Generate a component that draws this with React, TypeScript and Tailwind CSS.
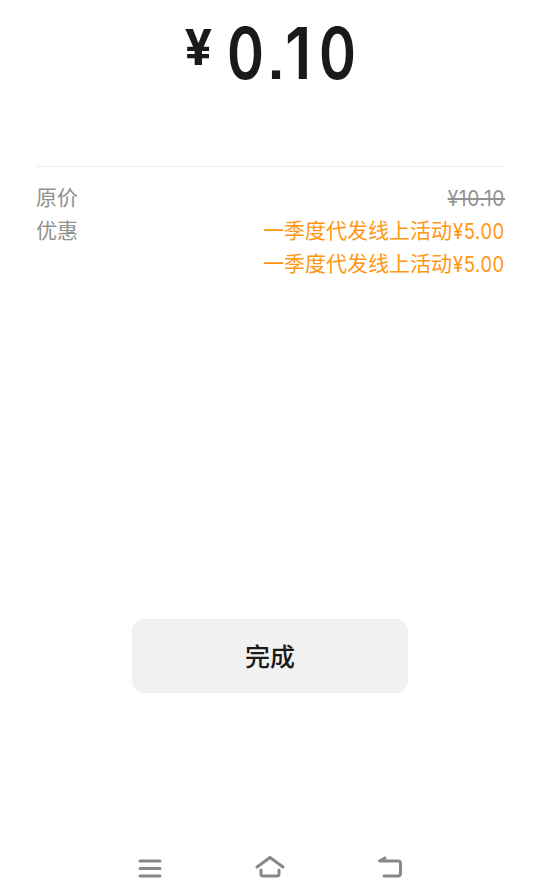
const discounts = [
  { name: "一季度代发线上活动", amount: "¥5.00" },
  { name: "一季度代发线上活动", amount: "¥5.00" },
]

export default function PaymentResultPage() {
  return (
    <div className="flex flex-col h-[888px] w-[538px] overflow-hidden bg-white font-['Inter','Noto_Sans_CJK_SC',sans-serif] text-[#1a1a1a]">
      <div className="flex h-[166px] pl-[185px]">
        <span className="w-[42px] pt-[23px] font-['Roboto'] text-[50px] leading-[50px] font-bold">
          ¥
        </span>
        <div className="flex pt-[17px] text-[71px] leading-[73px] font-semibold">
          <span className="w-[41px] origin-left scale-x-[0.79]">0</span>
          <span className="w-[17px] origin-left font-['Liberation_Sans'] text-[58px] font-bold leading-[83px]">
            .
          </span>
          <span className="w-[34px] origin-left scale-x-[0.88]">1</span>
          <span className="w-[41px] origin-left scale-x-[0.79]">0</span>
        </div>
      </div>

      <div className="ml-9 mr-[34px] h-[452px] border-t border-[#eeeeee] pt-[14px] text-[21px] leading-[33px]">
        <div className="flex justify-between">
          <span className="text-[#919191]">原价</span>
          <span className="-mr-px mt-px h-8 origin-right scale-x-[0.91] tracking-[0.7px] text-[#919191] line-through">
            ¥10.10
          </span>
        </div>
        <div className="flex justify-between">
          <span className="text-[#919191]">优惠</span>
          <div className="text-[#ff9714]">
            {discounts.map((item, index) => (
              <div key={index} className="flex h-[33px] justify-end">
                <span>{item.name}</span>
                <span className="flex w-[52px] justify-end pt-px">
                  <span className="-mr-px origin-right scale-x-[0.88] tracking-[0.6px]">
                    {item.amount}
                  </span>
                </span>
              </div>
            ))}
          </div>
        </div>
      </div>

      <button className="ml-[132px] mt-px h-[74px] w-[276px] shrink-0 rounded-xl bg-[#f1f1f1] pt-[3px] text-[25px] font-medium">
        完成
      </button>

      {/* system navigation keys */}
      <div className="mt-auto flex h-10 gap-20 pl-[130px] text-[#888888]">
        <svg width="40" height="40" viewBox="0 0 40 40" fill="none" stroke="currentColor" strokeWidth="3" strokeLinecap="round">
          <path d="M10 13H30M10 20.5H30M10 28H30" />
        </svg>
        <svg width="40" height="40" viewBox="0 0 40 40" fill="none" stroke="currentColor" strokeWidth="3" strokeLinecap="round" strokeLinejoin="round">
          <path d="M7 19L20 9.5L33 19" />
          <path d="M11 22V26Q11 28 13 28H27Q29 28 29 26V22" />
        </svg>
        <svg width="40" height="40" viewBox="0 0 40 40" fill="none" stroke="currentColor" strokeWidth="3" strokeLinecap="round" strokeLinejoin="round">
          <path d="M15 10L9.500 13H28Q30.500 13 30.500 15.500V25.500Q30.500 28 28 28H14" />
        </svg>
      </div>
    </div>
  )
}
